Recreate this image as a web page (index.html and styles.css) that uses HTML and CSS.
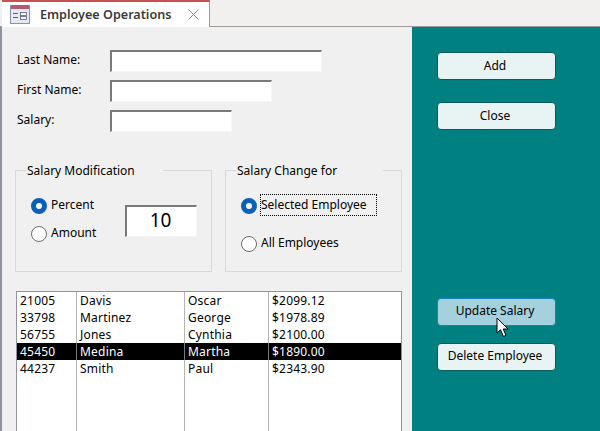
FILE: index.html
```html
<!DOCTYPE html>
<html lang="en">
<head>
    <meta charset="UTF-8">
    <meta name="viewport" content="width=device-width, initial-scale=1.0">
    <title>Employee Operations</title>
    <link rel="stylesheet" href="styles.css">
</head>
<body>
    <div class="tabbar">
        <div class="tab">
            <svg class="tab-icon" width="20" height="20" viewBox="0 0 20 20">
                <rect x="0.5" y="1.5" width="19" height="18" fill="#e6e9f2" stroke="#8a93ad"/>
                <rect x="1" y="1" width="18" height="4" fill="#b5596e"/>
                <rect x="3" y="9" width="5" height="1" fill="#5a6480"/>
                <rect x="3" y="13" width="5" height="1" fill="#5a6480"/>
                <rect x="10.5" y="8.5" width="6" height="3" fill="#f5f6fa" stroke="#5a6480" stroke-width="0.8"/>
                <rect x="10.5" y="12.5" width="6" height="3" fill="#f5f6fa" stroke="#5a6480" stroke-width="0.8"/>
            </svg>
            <span class="tab-title">Employee Operations</span>
            <svg class="tab-close" width="11" height="11" viewBox="0 0 11 11">
                <path d="M0.5 0.5 L10.5 10.5 M10.5 0.5 L0.5 10.5" stroke="#8a8a8a" fill="none"/>
            </svg>
        </div>
    </div>

    <div class="main">
        <div class="form">
            <div class="fields">
                <div class="field">
                    <label>Last Name:</label>
                    <div class="textbox long"></div>
                </div>
                <div class="field">
                    <label>First Name:</label>
                    <div class="textbox medium"></div>
                </div>
                <div class="field">
                    <label>Salary:</label>
                    <div class="textbox short"></div>
                </div>
            </div>

            <div class="groups">
                <fieldset class="group group-mod">
                    <legend>Salary Modification</legend>
                    <div class="radios">
                        <div class="radio-row"><span class="radio checked"></span><span class="radio-text">Percent</span></div>
                        <div class="radio-row"><span class="radio"></span><span class="radio-text">Amount</span></div>
                    </div>
                    <div class="amount">10</div>
                </fieldset>
                <fieldset class="group group-for">
                    <legend>Salary Change for</legend>
                    <div class="radios wide">
                        <div class="radio-row"><span class="radio checked"></span><span class="radio-text focused">Selected Employee</span></div>
                        <div class="radio-row"><span class="radio"></span><span class="radio-text">All Employees</span></div>
                    </div>
                </fieldset>
            </div>

            <div class="listbox">
                <div class="list-row"><span>21005</span><span>Davis</span><span>Oscar</span><span>$2099.12</span></div>
                <div class="list-row"><span>33798</span><span>Martinez</span><span>George</span><span>$1978.89</span></div>
                <div class="list-row"><span>56755</span><span>Jones</span><span>Cynthia</span><span>$2100.00</span></div>
                <div class="list-row selected"><span>45450</span><span>Medina</span><span>Martha</span><span>$1890.00</span></div>
                <div class="list-row"><span>44237</span><span>Smith</span><span>Paul</span><span>$2343.90</span></div>
            </div>
        </div>

        <div class="side">
            <div class="btn-group">
                <button class="btn">Add</button>
                <button class="btn">Close</button>
            </div>
            <div class="btn-group lower">
                <button class="btn hover">Update Salary
                    <svg class="cursor" width="15" height="21" viewBox="0 0 15 21">
                        <path d="M1 1 L1 16 L4.5 12.8 L7.5 19.5 L10 18.3 L7.2 12 L12 12 Z" fill="#fff" stroke="#000" stroke-width="1"/>
                    </svg>
                </button>
                <button class="btn">Delete Employee</button>
            </div>
        </div>
    </div>
</body>
</html>
```
FILE: styles.css
```css
html, body {
    margin: 0;
    padding: 0;
}
body {
    width: 600px;
    height: 431px;
    overflow: hidden;
    font-family: "Noto Sans", "Open Sans", sans-serif;
    font-size: 12px;
    color: #000;
    background: #f0efee;
}
.tabbar {
    height: 26px;
    border-bottom: 1px solid #9a9a9a;
    display: flex;
    background: #f1f0ef;
}
.tab {
    width: 207px;
    height: 25px;
    margin-left: 2px;
    margin-bottom: -1px;
    display: flex;
    align-items: center;
    background: #fff;
    border-top: 2px solid #c8504f;
    border-right: 1px solid #9a9a9a;
}
.tab-icon {
    margin-left: 8px;
    margin-top: -2px;
}
.tab-title {
    margin-left: 10px;
    font-weight: 600;
    color: #3a3a3a;
    font-size: 12.6px;
    white-space: nowrap;
}
.tab-close {
    margin-left: 17px;
}
.main {
    display: flex;
    height: 404px;
}
.form {
    width: 412px;
    box-sizing: border-box;
    background: #f0f0f0;
    border-left: 2px solid #8f949c;
    padding: 23px 10px 0 13px;
}
.fields {
    display: flex;
    flex-direction: column;
    gap: 8px;
}
.field {
    display: flex;
    align-items: center;
    height: 22px;
}
.field label {
    width: 93px;
    margin-left: 2px;
    margin-bottom: 4px;
}
.textbox {
    height: 22px;
    box-sizing: border-box;
    background: #fff;
    border: 2px solid #7a7a7a;
    border-right: 1px solid #f6f6f6;
    border-bottom: 1px solid #f6f6f6;
}
.long { width: 212px; }
.medium { width: 162px; }
.short { width: 122px; }

.groups {
    display: flex;
    gap: 13px;
    margin-top: 30px;
}
.group {
    margin: 0;
    height: 110px;
    box-sizing: border-box;
    border: 1px solid #d9d9d9;
    padding: 0 0 0 15px;
    display: flex;
}
.group legend {
    padding: 0 0 0 1px;
    margin-left: -5px;
    line-height: 17px;
}
.group-mod { width: 197px; }
.group-mod legend { width: 136px; }
.group-for { width: 177px; }
.group-for legend { width: 146px; }
.radios {
    width: 94px;
    padding-top: 18px;
    display: flex;
    flex-direction: column;
    gap: 10px;
}
.radios.wide {
    width: auto;
    gap: 20px;
}
.radio-row {
    display: flex;
    align-items: center;
    gap: 4px;
    height: 18px;
    white-space: nowrap;
}
.radio {
    width: 16px;
    height: 16px;
    box-sizing: border-box;
    border: 1px solid #6e6e6e;
    border-radius: 50%;
    background: #fff;
    flex: none;
}
.radio.checked {
    border: 5px solid #0a62b8;
}
.radio-text {
    margin-bottom: 3px;
}
.focused {
    outline: 1px dotted #000;
    line-height: 20px;
    width: 115px;
}
.amount {
    width: 72px;
    height: 32px;
    margin-top: 26px;
    box-sizing: border-box;
    background: #fff;
    border: 2px solid #7a7a7a;
    border-right: 1px solid #f6f6f6;
    border-bottom: 1px solid #f6f6f6;
    padding-right: 2px;
    text-align: center;
    font-size: 19px;
    line-height: 27px;
}
.listbox {
    margin-top: 19px;
    width: 386px;
    height: 142px;
    box-sizing: border-box;
    margin-left: 1px;
    background: #fff;
    border: 1px solid #8f949c;
    border-bottom: none;
    background-image: linear-gradient(#b4b4b4, #b4b4b4), linear-gradient(#b4b4b4, #b4b4b4), linear-gradient(#b4b4b4, #b4b4b4);
    background-size: 1px 100%;
    background-repeat: no-repeat;
    background-position: 59px 0, 167px 0, 251px 0;
}
.list-row {
    display: grid;
    grid-template-columns: 60px 108px 84px 1fr;
    height: 17px;
    line-height: 17px;
    letter-spacing: 0.2px;
}
.list-row span {
    padding-left: 3px;
}
.list-row.selected {
    background: #000;
    color: #fff;
}
.list-row.selected span + span {
    border-left: 1px solid #777;
    margin-left: -1px;
}
.side {
    flex: 1;
    background: #008080;
    padding: 25px 44px 0 25px;
}
.btn-group {
    display: flex;
    flex-direction: column;
    gap: 22px;
}
.btn-group.lower {
    margin-top: 168px;
    gap: 17px;
}
.btn {
    position: relative;
    height: 28px;
    width: 119px;
    padding: 0 3px 2px 0;
    background: #e8f3f4;
    border: 1px solid #0a5a5a;
    border-radius: 4px;
    font-family: inherit;
    font-size: 12px;
    color: #000;
}
.lower .btn {
    padding-bottom: 4px;
}
.btn.hover {
    background: #a5d1de;
    border-color: #1a7fc0;
}
.cursor {
    position: absolute;
    left: 58px;
    top: 18px;
}
```
